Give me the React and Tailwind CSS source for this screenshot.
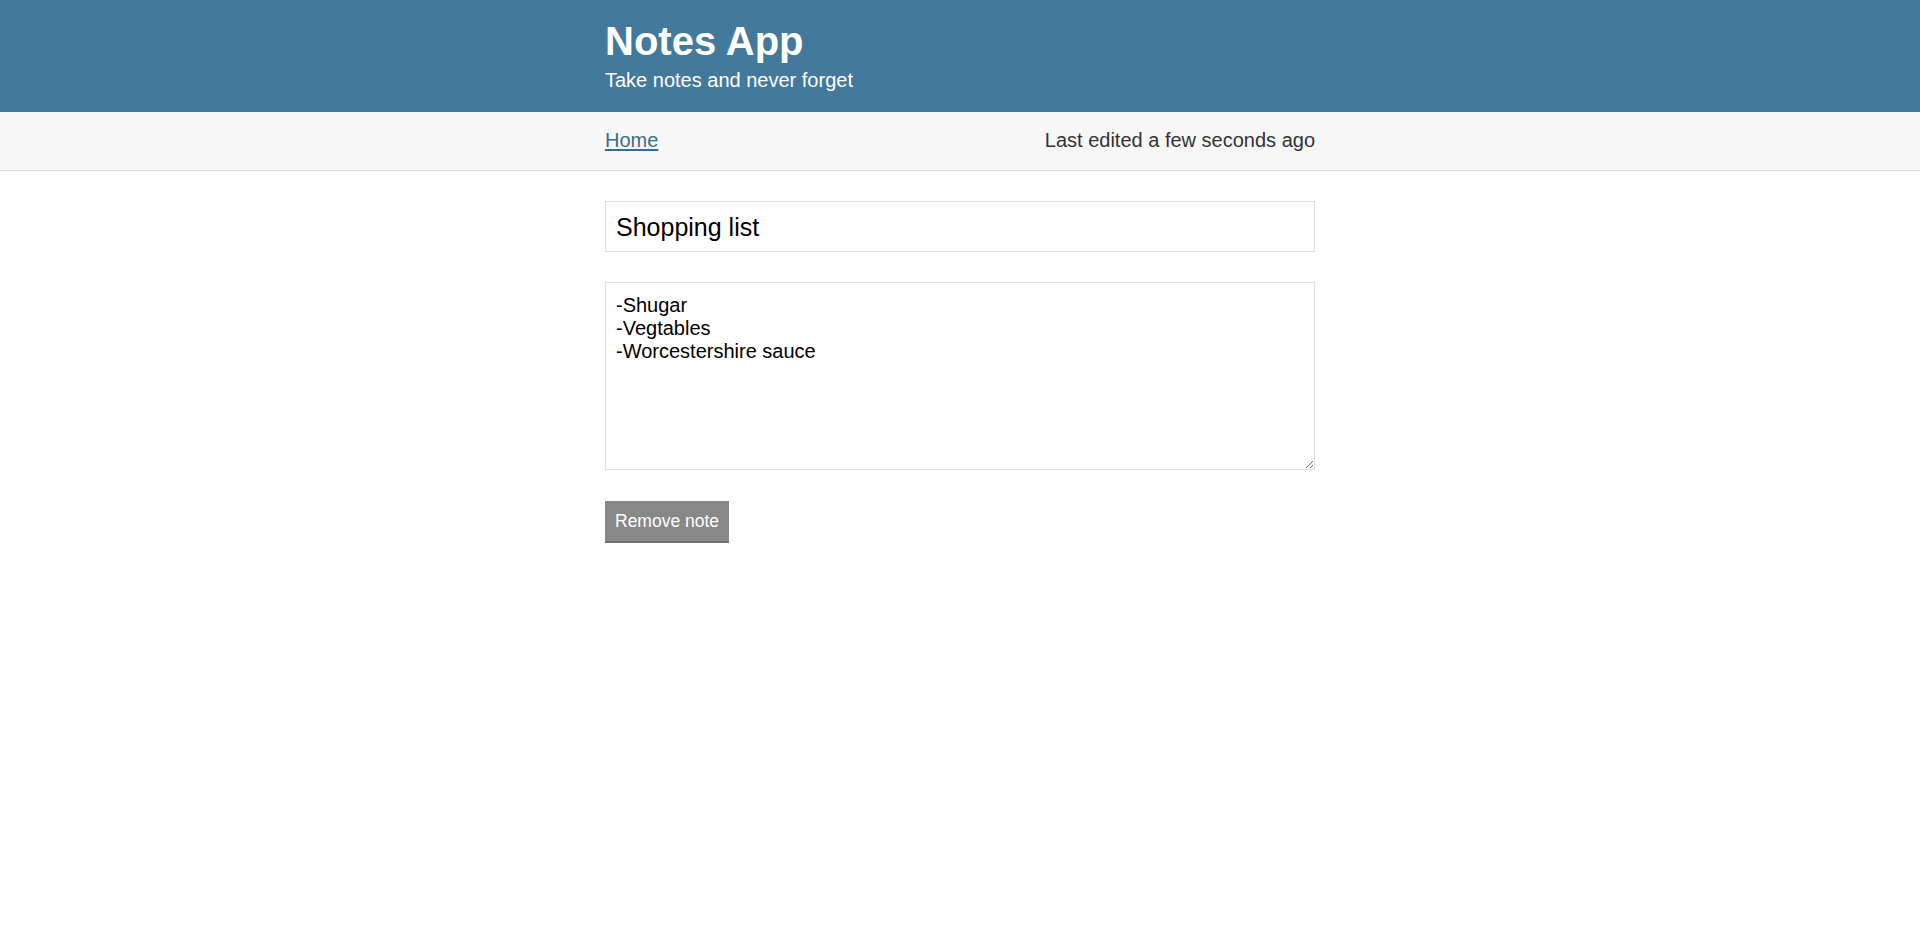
import React, { useState } from 'react';

const App = () => {
  const [title, setTitle] = useState('Shopping list');
  const [body, setBody] = useState('-Shugar\n-Vegtables\n-Worcestershire sauce');

  return (
    <div className="min-h-screen bg-white text-[#333333] font-['Liberation_Sans',Arial,sans-serif]">
      <header className="bg-[#43799c] text-white pt-[18px] pb-[20px]">
        <div className="w-[710px] mx-auto">
          <h1 className="text-[40px] leading-[46px] font-bold">Notes App</h1>
          <h2 className="mt-[5px] text-[20px] leading-[23px] font-light">Take notes and never forget</h2>
        </div>
      </header>

      <div className="bg-[#f7f7f7] border-b border-[#dedfe0] pt-[17px] pb-[18px]">
        <div className="w-[710px] mx-auto flex justify-between items-center text-[20px] leading-[23px]">
          <a href="#" className="text-[#3b6b8c] underline underline-offset-[2px]">Home</a>
          <span>Last edited a few seconds ago</span>
        </div>
      </div>

      <main className="w-[710px] mx-auto pt-[30px] flex flex-col items-start">
        <input
          type="text"
          value={title}
          onChange={(e) => setTitle(e.target.value)}
          className="w-full h-[51px] border border-[#dedfe0] px-[10px] pt-[2px] text-[25px] leading-[29px] text-black outline-none font-['Liberation_Sans',Arial,sans-serif]"
        />
        <textarea
          value={body}
          onChange={(e) => setBody(e.target.value)}
          className="mt-[30px] w-full h-[188px] border border-[#dedfe0] px-[10px] pt-[11px] pb-[9px] text-[20px] leading-[23px] text-black outline-none font-['Liberation_Sans',Arial,sans-serif]"
        />
        <button className="mt-[31px] bg-[#888888] border-b-[2.5px] border-[#717171] text-white text-[17.5px] leading-[20px] px-[10px] pt-[10px] pb-[10px] font-['Liberation_Sans',Arial,sans-serif]">
          Remove note
        </button>
      </main>
    </div>
  );
};

export default App;
